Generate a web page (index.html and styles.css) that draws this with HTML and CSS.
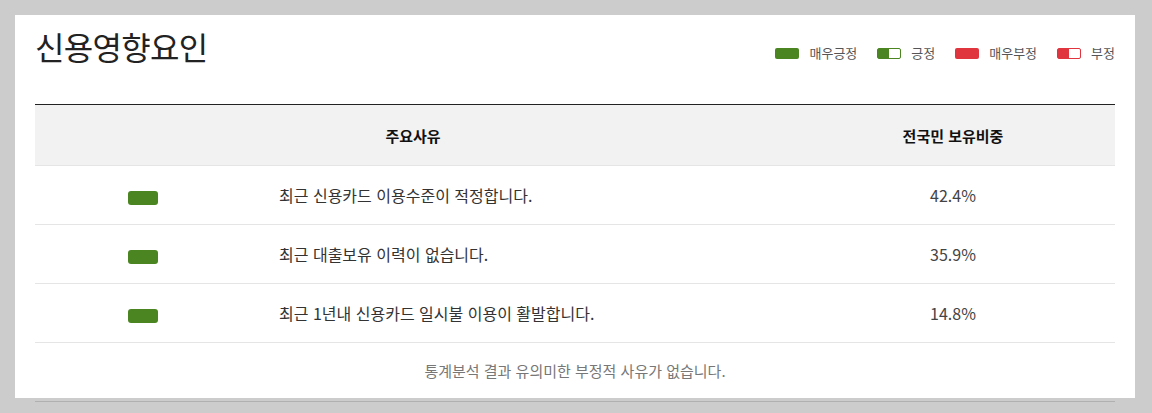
FILE: index.html
```html
<!DOCTYPE html>
<html lang="ko">
<head>
<meta charset="utf-8">
<title>신용영향요인</title>
<link rel="stylesheet" href="styles.css">
</head>
<body>
<div class="card">
  <div class="head">
    <h1 class="title">신용영향요인</h1>
    <ul class="legend">
      <li><span class="chip chip-green"></span>매우긍정</li>
      <li><span class="chip chip-green-half"></span>긍정</li>
      <li><span class="chip chip-red"></span>매우부정</li>
      <li><span class="chip chip-red-half"></span>부정</li>
    </ul>
  </div>
  <table class="factors">
    <colgroup>
      <col class="c-mark">
      <col class="c-reason">
      <col class="c-share">
    </colgroup>
    <thead>
      <tr>
        <th colspan="2">주요사유</th>
        <th>전국민 보유비중</th>
      </tr>
    </thead>
    <tbody>
      <tr>
        <td class="mark"><span class="ind ind-green"></span></td>
        <td class="reason">최근 신용카드 이용수준이 적정합니다.</td>
        <td class="share">42.4%</td>
      </tr>
      <tr>
        <td class="mark"><span class="ind ind-green"></span></td>
        <td class="reason">최근 대출보유 이력이 없습니다.</td>
        <td class="share">35.9%</td>
      </tr>
      <tr>
        <td class="mark"><span class="ind ind-green"></span></td>
        <td class="reason">최근 1년내 신용카드 일시불 이용이 활발합니다.</td>
        <td class="share">14.8%</td>
      </tr>
      <tr class="note">
        <td colspan="3">통계분석 결과 유의미한 부정적 사유가 없습니다.</td>
      </tr>
    </tbody>
  </table>
</div>
</body>
</html>
```

FILE: styles.css
```css
* { box-sizing: border-box; }

html, body {
  margin: 0;
  padding: 0;
  background: #cccccc;
}

body {
  padding: 15px 17px 20px 15px;
  font-family: "Noto Sans CJK KR", "Noto Sans", sans-serif;
  color: #333;
}

.card {
  background: #fff;
  height: 383px;
  padding: 11px 20px 0 20px;
}

.head {
  display: flex;
  justify-content: space-between;
  align-items: flex-start;
  height: 78px;
}

.title {
  margin: 0;
  font-size: 32px;
  font-weight: 400;
  line-height: 40px;
  color: #222;
  letter-spacing: -0.7px;
}

.legend {
  list-style: none;
  margin: 18px 0 0 0;
  padding: 0;
  display: flex;
  gap: 20px;
  font-size: 13px;
  line-height: 18px;
  color: #555;
}

.legend li {
  display: flex;
  align-items: center;
  gap: 10px;
}

.chip {
  display: inline-block;
  width: 24px;
  height: 11px;
  border-radius: 2px;
}

.chip-green { background: #4a8522; }
.chip-red { background: #e0343e; }
.chip-green-half {
  border: 1px solid #4a8522;
  background: linear-gradient(to right, #4a8522 50%, #fff 50%);
}
.chip-red-half {
  border: 1px solid #e0343e;
  background: linear-gradient(to right, #e0343e 50%, #fff 50%);
}

.factors {
  width: 100%;
  border-collapse: collapse;
  table-layout: fixed;
  border-top: 1px solid #222;
}

.c-mark { width: 20%; }
.c-reason { width: 50%; }
.c-share { width: 30%; }

.factors th {
  height: 61px;
  background: #f2f2f2;
  font-size: 15px;
  font-weight: 700;
  color: #111;
  text-align: center;
  border-bottom: 1px solid #e5e5e5;
  padding: 0;
}

.factors td {
  height: 59px;
  border-bottom: 1px solid #e5e5e5;
  font-size: 16px;
  padding: 0;
}

.mark { text-align: center; }

.ind {
  display: inline-block;
  width: 30px;
  height: 14px;
  border-radius: 3px;
  vertical-align: middle;
}

.ind-green { background: #4a8522; }

.reason {
  padding-left: 28px !important;
  color: #333;
}

.share {
  text-align: center;
  color: #444;
}

.factors .note td {
  height: 59px;
  text-align: center;
  font-size: 15px;
  color: #777;
  border-bottom: 1px solid #b0b0b0;
  padding-bottom: 4px;
}
```
